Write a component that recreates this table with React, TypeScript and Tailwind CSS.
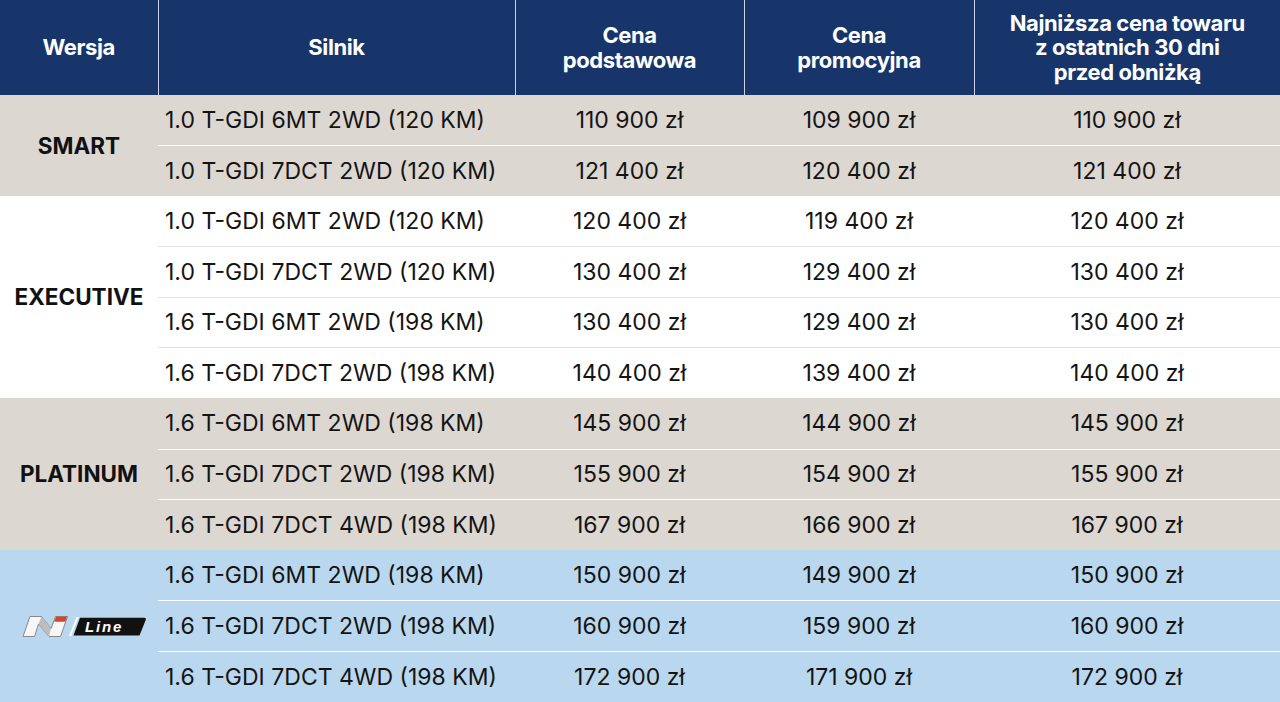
import React from "react"

type Row = { engine: string; base: string; promo: string; lowest: string }
type Group = { name: string; bg: string; line: string; rows: Row[] }

const groups: Group[] = [
  {
    name: "SMART",
    bg: "bg-[#dcd7d1]",
    line: "border-white",
    rows: [
      { engine: "1.0 T-GDI 6MT 2WD (120 KM)", base: "110 900 zł", promo: "109 900 zł", lowest: "110 900 zł" },
      { engine: "1.0 T-GDI 7DCT 2WD (120 KM)", base: "121 400 zł", promo: "120 400 zł", lowest: "121 400 zł" },
    ],
  },
  {
    name: "EXECUTIVE",
    bg: "bg-white",
    line: "border-[#e2e2e2]",
    rows: [
      { engine: "1.0 T-GDI 6MT 2WD (120 KM)", base: "120 400 zł", promo: "119 400 zł", lowest: "120 400 zł" },
      { engine: "1.0 T-GDI 7DCT 2WD (120 KM)", base: "130 400 zł", promo: "129 400 zł", lowest: "130 400 zł" },
      { engine: "1.6 T-GDI 6MT 2WD (198 KM)", base: "130 400 zł", promo: "129 400 zł", lowest: "130 400 zł" },
      { engine: "1.6 T-GDI 7DCT 2WD (198 KM)", base: "140 400 zł", promo: "139 400 zł", lowest: "140 400 zł" },
    ],
  },
  {
    name: "PLATINUM",
    bg: "bg-[#dcd7d1]",
    line: "border-white",
    rows: [
      { engine: "1.6 T-GDI 6MT 2WD (198 KM)", base: "145 900 zł", promo: "144 900 zł", lowest: "145 900 zł" },
      { engine: "1.6 T-GDI 7DCT 2WD (198 KM)", base: "155 900 zł", promo: "154 900 zł", lowest: "155 900 zł" },
      { engine: "1.6 T-GDI 7DCT 4WD (198 KM)", base: "167 900 zł", promo: "166 900 zł", lowest: "167 900 zł" },
    ],
  },
  {
    name: "N Line",
    bg: "bg-[#b9d8ef]",
    line: "border-white",
    rows: [
      { engine: "1.6 T-GDI 6MT 2WD (198 KM)", base: "150 900 zł", promo: "149 900 zł", lowest: "150 900 zł" },
      { engine: "1.6 T-GDI 7DCT 2WD (198 KM)", base: "160 900 zł", promo: "159 900 zł", lowest: "160 900 zł" },
      { engine: "1.6 T-GDI 7DCT 4WD (198 KM)", base: "172 900 zł", promo: "171 900 zł", lowest: "172 900 zł" },
    ],
  },
]

function NLineLogo() {
  return (
    <svg width="126" height="26" viewBox="0 0 126 26" className="ml-[21px] block">
      {/* N mark */}
      <path d="M2 23.5 L9 3.5 L20.5 3.5 L30 15.5 L34.6 3.5 L46.5 3.5 L39.5 23.5 L28 23.5 L17.5 11 L13.5 23.5 Z" fill="#f7f7f7" stroke="#7d7d7d" strokeWidth="0.9" strokeLinejoin="round" />
      <path d="M17.5 11 L20.5 3.5 L30 15.5 L28 23.5 Z" fill="#bdbdbd" />
      <path d="M35 3.8 L46 3.8 L44.2 8.8 L33.2 8.8 Z" fill="#d2472f" />
      {/* slash */}
      <path d="M48 23 L55.5 4 L57.6 4 L50.1 23 Z" fill="#ffffff" />
      {/* black plate */}
      <path d="M52.5 22.5 L59 4.8 L123 4.8 Q125.5 4.8 124.7 7 L118.5 22.5 Z" fill="#111111" />
      <text x="64" y="19" fill="#ffffff" fontSize="15" fontWeight="700" fontStyle="italic" fontFamily="Liberation Sans, Arial, sans-serif" letterSpacing="1.8">
        Line
      </text>
    </svg>
  )
}

export default function App() {
  return (
    <div className="w-[1280px] h-[702px] overflow-hidden bg-white font-['Inter',sans-serif] text-[#141414]">
      <table className="w-full border-collapse table-fixed">
        <colgroup>
          <col className="w-[158px]" />
          <col className="w-[357px]" />
          <col className="w-[229px]" />
          <col className="w-[230px]" />
          <col />
        </colgroup>
        <thead>
          <tr className="h-[95px] bg-[#17356a] text-white text-[22px] font-bold leading-[25px] tracking-[-0.4px]">
            <th className="font-bold">Wersja</th>
            <th className="border-l border-[#c9d1e0] font-bold">Silnik</th>
            <th className="border-l border-[#c9d1e0] font-bold">
              Cena
              <br />
              podstawowa
            </th>
            <th className="border-l border-[#c9d1e0] font-bold">
              Cena
              <br />
              promocyjna
            </th>
            <th className="border-l border-[#c9d1e0] font-bold leading-[24.5px]">
              Najniższa cena towaru
              <br />
              z ostatnich 30 dni
              <br />
              przed obniżką
            </th>
          </tr>
        </thead>
        <tbody className="text-[23px]">
          {groups.map((g) =>
            g.rows.map((r, i) => (
              <tr key={g.name + i} className={`h-[50.58px] ${g.bg}`}>
                {i === 0 && (
                  <td rowSpan={g.rows.length} className="text-center font-bold text-[22.5px] text-[#111]">
                    {g.name === "N Line" ? <NLineLogo /> : g.name}
                  </td>
                )}
                <td className={`pl-[7px] ${i > 0 ? `border-t ${g.line}` : ""}`}>{r.engine}</td>
                <td className={`text-center ${i > 0 ? `border-t ${g.line}` : ""}`}>{r.base}</td>
                <td className={`text-center ${i > 0 ? `border-t ${g.line}` : ""}`}>{r.promo}</td>
                <td className={`text-center ${i > 0 ? `border-t ${g.line}` : ""}`}>{r.lowest}</td>
              </tr>
            ))
          )}
        </tbody>
      </table>
    </div>
  )
}
